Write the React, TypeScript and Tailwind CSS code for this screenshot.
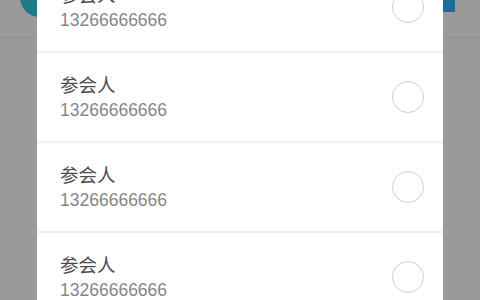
import React from "react";

const attendees = [
  { name: "参会人", phone: "13266666666" },
  { name: "参会人", phone: "13266666666" },
  { name: "参会人", phone: "13266666666" },
  { name: "参会人", phone: "13266666666" },
];

const AttendeeRow = ({ name, phone }: { name: string; phone: string }) => (
  <div className="h-[90px] border-b-2 border-[#f0eff0] flex items-center justify-between pl-[23px] pr-[19px]">
    <div className="flex flex-col pt-[2px]">
      <span className="text-[18.5px] leading-[25px] text-[#4d4b4c]">{name}</span>
      <span className="text-[17.5px] leading-[25px] text-[#878587]">{phone}</span>
    </div>
    <div className="w-[32px] h-[32px] rounded-full border-[1.5px] border-[#cfcdce] bg-white" />
  </div>
);

export default function App() {
  return (
    <div
      className="relative w-[480px] h-[300px] overflow-hidden bg-[#9b999a]"
      style={{ fontFamily: '"Liberation Sans", "Noto Sans CJK SC", sans-serif' }}
    >
      {/* dimmed page header behind the dialog */}
      <div className="h-[38px] border-b border-[#8f8d8e] flex justify-between items-start">
        <div className="ml-[20px] mt-[-23px] w-[40px] h-[40px] rounded-full bg-[#1e7b86]" />
        <div className="mr-[25px] w-[24px] h-[12px] rounded-bl-[4px] bg-[#1b6d9a]" />
      </div>

      {/* dialog list */}
      <div className="absolute left-[37px] top-0 w-[406px] h-full bg-white overflow-hidden">
        <div className="mt-[-37px]">
          {attendees.map((a, i) => (
            <AttendeeRow key={i} name={a.name} phone={a.phone} />
          ))}
        </div>
      </div>
    </div>
  );
}
